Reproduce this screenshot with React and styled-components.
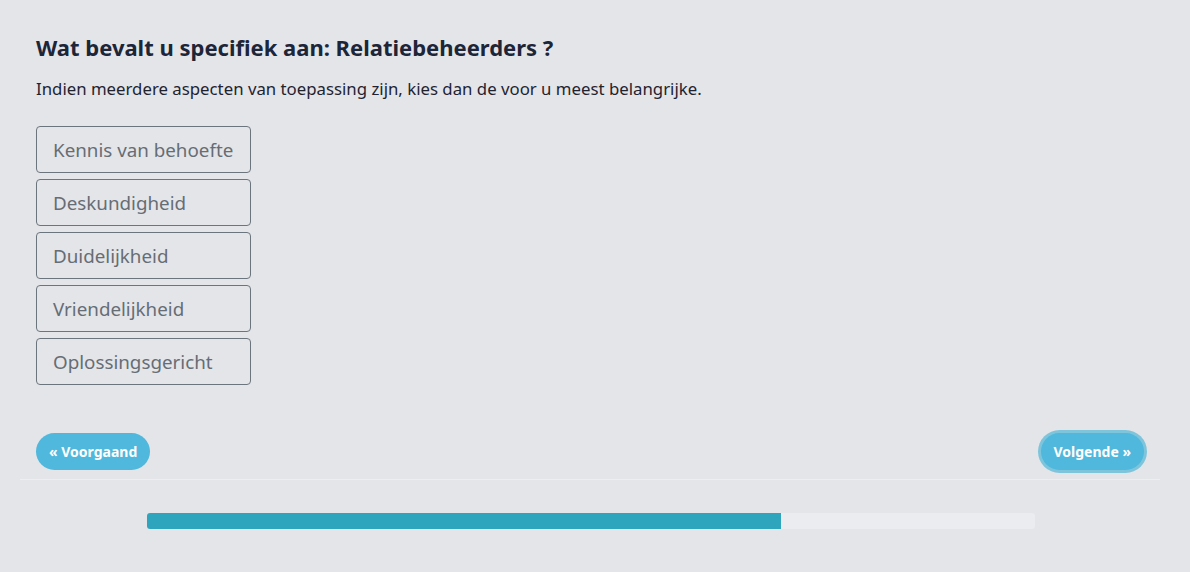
import styled, { createGlobalStyle } from "styled-components";

const GlobalStyle = createGlobalStyle`
  body {
    margin: 0;
    background: #e4e5e9;
    font-family: "Noto Sans", "Lato", sans-serif;
    color: #212529;
  }
`;

const options = [
  "Kennis van behoefte",
  "Deskundigheid",
  "Duidelijkheid",
  "Vriendelijkheid",
  "Oplossingsgericht",
];

export default function App() {
  return (
    <>
      <GlobalStyle />
      <Page>
        <Question>
          <Title>Wat bevalt u specifiek aan: Relatiebeheerders ?</Title>
          <Hint>
            Indien meerdere aspecten van toepassing zijn, kies dan de voor u
            meest belangrijke.
          </Hint>
          <OptionList>
            {options.map((o) => (
              <Option key={o}>{o}</Option>
            ))}
          </OptionList>
          <Nav>
            <NavButton>« Voorgaand</NavButton>
            <NavButton $focused>Volgende »</NavButton>
          </Nav>
        </Question>
        <Footer>
          <Progress>
            <ProgressFill style={{ width: `${(5 / 7) * 100}%` }} />
          </Progress>
        </Footer>
      </Page>
    </>
  );
}

const Page = styled.div`
  width: 1140px;
  margin: 0 20px;
`;

const Question = styled.div`
  padding: 33px 16px 9px;
  border-bottom: 1px solid #eceef1;
`;

const Title = styled.h2`
  margin: 0;
  font-size: 22px;
  line-height: 28px;
  font-weight: 700;
  color: #1d2538;
`;

const Hint = styled.p`
  margin: 16px 0 0;
  font-size: 16.8px;
  line-height: 24px;
  color: #1f2330;
`;

const OptionList = styled.div`
  margin-top: 25px;
  display: flex;
  flex-direction: column;
  align-items: flex-start;
  gap: 6px;
`;

const Option = styled.button`
  width: 215px;
  height: 47px;
  padding: 0 16px;
  text-align: left;
  background: transparent;
  border: 1px solid #6c757d;
  border-radius: 4px;
  font-family: inherit;
  font-size: 18.8px;
  color: #666d75;
  white-space: nowrap;
  cursor: pointer;
`;

const Nav = styled.div`
  margin-top: 48px;
  display: flex;
  justify-content: space-between;
  align-items: center;
`;

const NavButton = styled.button`
  height: 37px;
  padding: 0 13px;
  border: none;
  border-radius: 19px;
  background: #4fb8dc;
  color: #fff;
  font-family: inherit;
  font-size: 14px;
  font-weight: 700;
  cursor: pointer;
  box-shadow: ${(p) => (p.$focused ? "0 0 0 3px #7ec5dc" : "none")};
`;

const Footer = styled.div`
  padding: 33px 0 32px 2px;
  display: flex;
  justify-content: center;
`;

const Progress = styled.div`
  width: 888px;
  height: 16px;
  background: #eaecef;
  border-radius: 3px;
  overflow: hidden;
`;

const ProgressFill = styled.div`
  height: 100%;
  background: #2ea5bc;
`;
